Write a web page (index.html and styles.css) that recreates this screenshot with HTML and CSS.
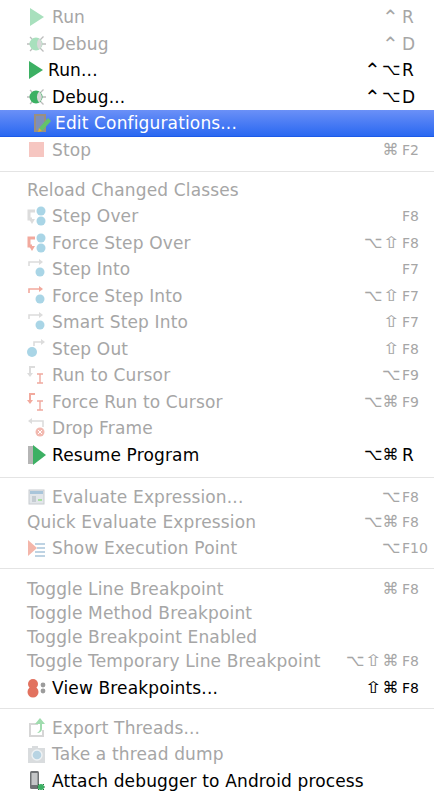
FILE: index.html
```html
<!DOCTYPE html>
<html lang="en">
<head>
<meta charset="utf-8">
<title>Run menu</title>
<link rel="stylesheet" href="styles.css">
</head>
<body>
<svg class="defs" aria-hidden="true">
  <symbol id="bug" viewBox="0 0 20 20">
    <path d="M3 3l3.5 3.5M3 17l3.5-3.5M0 10h3M13 6l3.5-3.5M13 14l3.5 3.5M14 10h5" stroke="#bdbdbd" stroke-width="1.3" fill="none"/>
    <circle cx="9" cy="10" r="6.5" fill="currentColor"/>
    <path d="M12 4.6a6.5 6.5 0 0 1 0 10.8a8 8 0 0 1 0-10.8z" fill="#d8d8d8"/>
  </symbol>
  <symbol id="stepover" viewBox="0 0 20 20">
    <path d="M8 5H2v8h3" stroke="currentColor" stroke-width="3" fill="none"/>
    <path d="M2 13h6l-3 5z" fill="currentColor"/>
    <circle cx="14" cy="5" r="4.5" fill="#a9d5e6"/>
    <circle cx="14" cy="15" r="4.5" fill="#a9d5e6"/>
  </symbol>
  <symbol id="stepinto" viewBox="0 0 20 20">
    <path d="M2 7V3h11" stroke="currentColor" stroke-width="1.6" fill="none"/>
    <path d="M12 0l4 3-4 3z" fill="currentColor"/>
    <circle cx="13" cy="13" r="4.5" fill="#a9d5e6"/>
  </symbol>
  <symbol id="cursor" viewBox="0 0 20 20">
    <path d="M3 9V2h5" stroke="currentColor" stroke-width="2" fill="none"/>
    <path d="M0 8h6l-3 4z" fill="currentColor"/>
    <path d="M10 9h6M10 18h6M13 9v9" stroke="#f0a99f" stroke-width="1.4" fill="none"/>
  </symbol>
</svg>

<main class="menu">
  <section class="group">
    <div class="row off">
      <svg class="icon" viewBox="0 0 20 20"><path d="M3 1l14 9-14 9z" fill="#a8e0bd"/></svg>
      <span class="label">Run</span>
      <span class="keys"><i class="mod ctrl">⌃</i><b class="key letter">R</b></span>
    </div>
    <div class="row off">
      <svg class="icon bug-off"><use href="#bug"/></svg>
      <span class="label">Debug</span>
      <span class="keys"><i class="mod ctrl">⌃</i><b class="key letter">D</b></span>
    </div>
    <div class="row">
      <svg class="icon icon-narrow" viewBox="0 0 20 20"><path d="M1 1l14 9-14 9z" fill="#3cb063"/></svg>
      <span class="label">Run...</span>
      <span class="keys"><i class="mod ctrl">⌃</i><i class="mod">⌥</i><b class="key letter">R</b></span>
    </div>
    <div class="row">
      <svg class="icon bug-on"><use href="#bug"/></svg>
      <span class="label">Debug...</span>
      <span class="keys"><i class="mod ctrl">⌃</i><i class="mod">⌥</i><b class="key letter">D</b></span>
    </div>
    <div class="row selected">
      <svg class="icon icon-wide" viewBox="0 0 23 20">
        <path d="M5 2h10v16H5z" fill="#7f8fb8" stroke="#9a8f80" stroke-width="2"/>
        <path d="M9 15l9-10 3 3-9 10-4 1z" fill="#63c36b"/>
        <path d="M8 19l1-4 3 3z" fill="#e8a33d"/>
      </svg>
      <span class="label">Edit Configurations...</span>
    </div>
    <div class="row off">
      <svg class="icon" viewBox="0 0 20 20"><rect x="2" y="2" width="15" height="15" fill="#f6c6c1"/></svg>
      <span class="label">Stop</span>
      <span class="keys"><i class="mod">⌘</i><b class="key">F2</b></span>
    </div>
  </section>

  <section class="group group-steps">
    <div class="row row-head off"><span class="label">Reload Changed Classes</span></div>
    <div class="row off">
      <svg class="icon step-gray"><use href="#stepover"/></svg>
      <span class="label">Step Over</span>
      <span class="keys"><b class="key">F8</b></span>
    </div>
    <div class="row off">
      <svg class="icon step-red"><use href="#stepover"/></svg>
      <span class="label">Force Step Over</span>
      <span class="keys"><i class="mod">⌥</i><i class="mod shift">⇧</i><b class="key">F8</b></span>
    </div>
    <div class="row off">
      <svg class="icon step-gray"><use href="#stepinto"/></svg>
      <span class="label">Step Into</span>
      <span class="keys"><b class="key">F7</b></span>
    </div>
    <div class="row off">
      <svg class="icon step-red"><use href="#stepinto"/></svg>
      <span class="label">Force Step Into</span>
      <span class="keys"><i class="mod">⌥</i><i class="mod shift">⇧</i><b class="key">F7</b></span>
    </div>
    <div class="row off">
      <svg class="icon step-gray"><use href="#stepinto"/></svg>
      <span class="label">Smart Step Into</span>
      <span class="keys"><i class="mod shift">⇧</i><b class="key">F7</b></span>
    </div>
    <div class="row off">
      <svg class="icon" viewBox="0 0 20 20">
        <circle cx="5" cy="13" r="5" fill="#a9d5e6"/>
        <path d="M7 7V3h8" stroke="#dcdcdc" stroke-width="1.6" fill="none"/>
        <path d="M14 0l4 3-4 3z" fill="#dcdcdc"/>
      </svg>
      <span class="label">Step Out</span>
      <span class="keys"><i class="mod shift">⇧</i><b class="key">F8</b></span>
    </div>
    <div class="row off">
      <svg class="icon step-gray"><use href="#cursor"/></svg>
      <span class="label">Run to Cursor</span>
      <span class="keys"><i class="mod">⌥</i><b class="key">F9</b></span>
    </div>
    <div class="row off">
      <svg class="icon step-red"><use href="#cursor"/></svg>
      <span class="label">Force Run to Cursor</span>
      <span class="keys"><i class="mod">⌥</i><i class="mod">⌘</i><b class="key">F9</b></span>
    </div>
    <div class="row off">
      <svg class="icon" viewBox="0 0 20 20">
        <path d="M16 9V3H4" stroke="#dcdcdc" stroke-width="1.6" fill="none"/>
        <path d="M5 0L1 3l4 3z" fill="#dcdcdc"/>
        <circle cx="13" cy="14" r="4.5" fill="#f2b9b0"/>
        <path d="M11 12l4 4M15 12l-4 4" stroke="#fff" stroke-width="1"/>
      </svg>
      <span class="label">Drop Frame</span>
    </div>
    <div class="row">
      <svg class="icon" viewBox="0 0 20 20">
        <rect x="1" y="1" width="6" height="18" fill="#b5b5b5"/>
        <path d="M6 0l13 10L6 20z" fill="#3cb063"/>
      </svg>
      <span class="label">Resume Program</span>
      <span class="keys"><i class="mod">⌥</i><i class="mod">⌘</i><b class="key letter">R</b></span>
    </div>
  </section>

  <section class="group">
    <div class="row off">
      <svg class="icon" viewBox="0 0 20 20">
        <rect x="2" y="3" width="15" height="14" fill="#e2e6ea" stroke="#c8ccd0"/>
        <rect x="3" y="4" width="13" height="3" fill="#a9c5da"/>
        <rect x="5" y="9" width="4" height="6" fill="#c5ccd2"/>
        <rect x="11" y="12" width="4" height="2" fill="#a8e0a0"/>
      </svg>
      <span class="label">Evaluate Expression...</span>
      <span class="keys"><i class="mod">⌥</i><b class="key">F8</b></span>
    </div>
    <div class="row row-quick off">
      <span class="label">Quick Evaluate Expression</span>
      <span class="keys"><i class="mod">⌥</i><i class="mod">⌘</i><b class="key">F8</b></span>
    </div>
    <div class="row off">
      <svg class="icon" viewBox="0 0 20 20">
        <path d="M1 2l9 8-9 8z" fill="#f4b6aa"/>
        <path d="M8 6h10M10 10h8M8 14h10M8 18h10" stroke="#a9c5da" stroke-width="1.6"/>
      </svg>
      <span class="label">Show Execution Point</span>
      <span class="keys"><i class="mod">⌥</i><b class="key">F10</b></span>
    </div>
  </section>

  <section class="group group-toggles">
    <div class="row row-tight off">
      <span class="label">Toggle Line Breakpoint</span>
      <span class="keys"><i class="mod">⌘</i><b class="key">F8</b></span>
    </div>
    <div class="row row-tight off"><span class="label">Toggle Method Breakpoint</span></div>
    <div class="row row-tight off"><span class="label">Toggle Breakpoint Enabled</span></div>
    <div class="row row-tight off">
      <span class="label">Toggle Temporary Line Breakpoint</span>
      <span class="keys"><i class="mod">⌥</i><i class="mod shift">⇧</i><i class="mod">⌘</i><b class="key">F8</b></span>
    </div>
    <div class="row row-view">
      <svg class="icon" viewBox="0 0 20 20">
        <circle cx="6" cy="6" r="5" fill="#e2725f"/>
        <circle cx="6" cy="14" r="5.5" fill="#e2725f"/>
        <circle cx="16" cy="7" r="2.4" fill="#9c9c9c"/>
        <circle cx="16" cy="13" r="2.4" fill="#9c9c9c"/>
      </svg>
      <span class="label">View Breakpoints...</span>
      <span class="keys"><i class="mod shift">⇧</i><i class="mod">⌘</i><b class="key">F8</b></span>
    </div>
  </section>

  <section class="group">
    <div class="row off">
      <svg class="icon" viewBox="0 0 20 20">
        <path d="M2 5h9v2H4v10h11v-5h2v7H2z" fill="#d6d6d6"/>
        <path d="M13 0l5 6h-3v5c0 2-2 4-5 4 2-1 3-3 3-4V6H8z" fill="#9fdcae"/>
      </svg>
      <span class="label">Export Threads...</span>
    </div>
    <div class="row off">
      <svg class="icon" viewBox="0 0 20 20">
        <path d="M1 4h4V2h6v2h7v15H1z" fill="#d9dcde"/>
        <circle cx="10" cy="11" r="5" fill="#b8d4e3" stroke="#eef2f4" stroke-width="1.4"/>
      </svg>
      <span class="label">Take a thread dump</span>
    </div>
    <div class="row">
      <svg class="icon" viewBox="0 0 20 20">
        <rect x="3" y="0" width="9" height="18" rx="1.5" fill="#6f7275"/>
        <rect x="4.5" y="2" width="6" height="12" fill="#c4c6c8"/>
        <path d="M11 13l6 6M17 13l-6 6M10 16h8" stroke="#1f6b35" stroke-width="1"/>
        <circle cx="14" cy="16" r="3" fill="#3cb063"/>
      </svg>
      <span class="label">Attach debugger to Android process</span>
    </div>
  </section>
</main>
</body>
</html>
```
FILE: styles.css
```css
html, body {
  margin: 0;
  padding: 0;
  background: #fff;
}

body {
  width: 434px;
  height: 800px;
  overflow: hidden;
  font-family: "DejaVu Sans", sans-serif;
  font-size: 17px;
  letter-spacing: 0.15px;
  color: #000;
}

.defs {
  display: none;
}

.menu {
  display: flex;
  flex-direction: column;
  padding-top: 4px;
}

.group {
  display: flex;
  flex-direction: column;
  padding: 6px 0 7px;
  border-bottom: 1px solid #e4e4e4;
}

.group:first-child {
  padding-top: 0;
}

.group:last-child {
  border-bottom: 0;
}

.group-steps {
  padding-bottom: 8.5px;
}

.group-toggles {
  padding-top: 8px;
  padding-bottom: 6px;
}

.row {
  display: flex;
  align-items: center;
  height: 26.5px;
  padding-left: 27px;
  white-space: nowrap;
}

.row-head {
  height: 25.5px;
}

.row-quick {
  height: 24.5px;
}

.row-tight {
  height: 24px;
}

.row-view {
  height: 27.5px;
  padding-top: 1px;
}

.off {
  color: #a6a6a6;
}

.selected {
  color: #fff;
  background: linear-gradient(#6b90f7, #2a68f1);
  border-bottom: 1px solid #1c5ae8;
  height: 26px;
}

.icon {
  flex: none;
  width: 20px;
  height: 20px;
  margin-right: 5px;
}

.icon-narrow {
  margin-left: 1px;
  margin-right: 0;
}

.icon-wide {
  width: 23px;
  margin-left: 3px;
  margin-right: 2px;
}

.bug-off {
  color: #a8e0bd;
}

.bug-on {
  color: #3cb063;
}

.step-gray {
  color: #dcdcdc;
}

.step-red {
  color: #f2a99d;
}

.label {
  flex: 1;
}

.keys {
  display: flex;
  justify-content: flex-end;
  align-items: center;
  height: 100%;
  letter-spacing: 0;
}

.mod {
  width: 17px;
  margin-right: 1px;
  line-height: 20px;
  text-align: center;
  font-style: normal;
  font-size: 16px;
}

.mod.shift {
  width: 11px;
  margin: 0 5px 0 2px;
  font-size: 16px;
  transform: scaleX(1.35);
}

.mod.ctrl {
  font-size: 20px;
}

.key {
  width: 32px;
  margin-left: 2px;
  font-weight: normal;
  font-size: 14px;
  text-align: left;
}

.key.letter {
  font-size: 17px;
}
```
